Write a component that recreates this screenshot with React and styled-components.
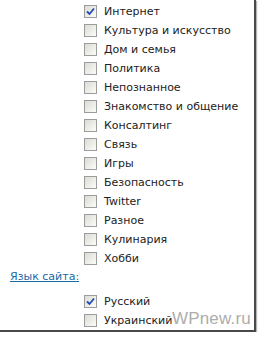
import React, { useState } from "react";
import styled, { createGlobalStyle } from "styled-components";

const GlobalStyle = createGlobalStyle`
  html, body {
    margin: 0;
    padding: 0;
    background: #ffffff;
  }
  body {
    font-family: "DejaVu Sans", Verdana, sans-serif;
  }
`;

const Frame = styled.div`
  position: relative;
  width: 256px;
  height: 332px;
  box-sizing: border-box;
  background: #ffffff;
  border-right: 2px solid #4a4a4a;
  border-bottom: 2px solid #4a4a4a;
  box-shadow: 1px 1px 1px #b5b5b5;
  overflow: hidden;
`;

const List = styled.div`
  display: flex;
  flex-direction: column;
  padding-left: ${({ $indent }) => $indent}px;
  padding-top: ${({ $top }) => $top || 0}px;
`;

const Row = styled.label`
  display: flex;
  align-items: center;
  gap: 7px;
  height: 19px;
  font-size: 11px;
  color: #222222;
  cursor: default;
`;

const Box = styled.span`
  width: 11px;
  height: 11px;
  border: 1px solid #9c9c9c;
  background: linear-gradient(135deg, #dcdcd6 0%, #efefea 60%, #fbfbf9 100%);
  display: flex;
  align-items: center;
  justify-content: center;
  flex-shrink: 0;
`;

const SectionLink = styled.a`
  display: block;
  margin: 1px 0 0 10px;
  height: 16px;
  line-height: 16px;
  font-size: 11px;
  color: #1a6aa6;
  text-decoration: underline;
`;

const Watermark = styled.div`
  position: absolute;
  right: 3px;
  bottom: 1px;
  font-family: "Liberation Sans", Arial, sans-serif;
  font-size: 17px;
  color: #adadad;
  letter-spacing: 0.2px;
`;

const Check = () => (
  <svg width="9" height="9" viewBox="0 0 9 9">
    <path d="M1 4.5 L3.5 7 L8 1.5" fill="none" stroke="#2349b8" strokeWidth="1.8" />
  </svg>
);

const categories = [
  ["Интернет", true],
  ["Культура и искусство", false],
  ["Дом и семья", false],
  ["Политика", false],
  ["Непознанное", false],
  ["Знакомство и общение", false],
  ["Консалтинг", false],
  ["Связь", false],
  ["Игры", false],
  ["Безопасность", false],
  ["Twitter", false],
  ["Разное", false],
  ["Кулинария", false],
  ["Хобби", false],
];

const languages = [
  ["Русский", true],
  ["Украинский", false],
];

const CheckRow = ({ label, checked }) => (
  <Row>
    <Box>{checked && <Check />}</Box>
    {label}
  </Row>
);

const App = () => {
  const [cats] = useState(categories);
  return (
    <>
      <GlobalStyle />
      <Frame>
        <List $indent={84} $top={2}>
          {cats.map(([label, checked]) => (
            <CheckRow key={label} label={label} checked={checked} />
          ))}
        </List>
        <SectionLink href="#">Язык сайта:</SectionLink>
        <List $indent={84} $top={7}>
          {languages.map(([label, checked]) => (
            <CheckRow key={label} label={label} checked={checked} />
          ))}
        </List>
        <Watermark>WPnew.ru</Watermark>
      </Frame>
    </>
  );
};

export default App;
